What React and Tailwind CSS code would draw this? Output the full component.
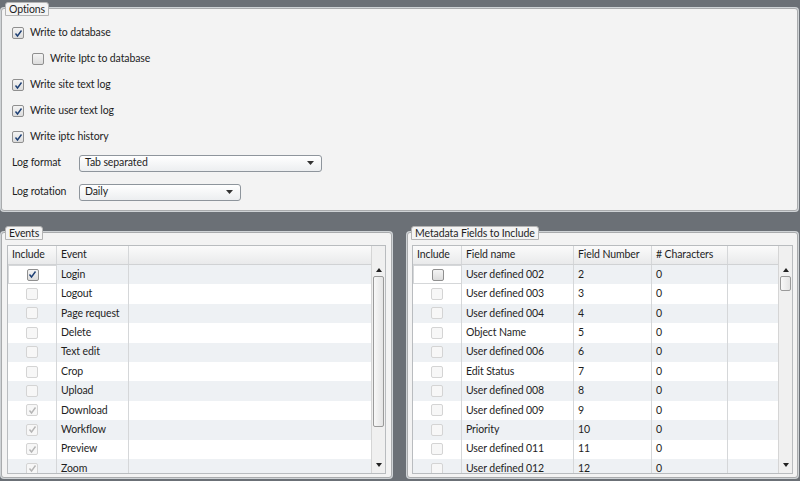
import React from "react";

const font = { fontFamily: 'Lato, "Open Sans", sans-serif' };

function CheckBox({ checked, faded }) {
    return (
        <div className={"w-[12px] h-[12px] border rounded-[2px] flex items-center justify-center shrink-0 " + (faded ? "border-[#d4d4d4] bg-[#f7f7f7]" : "border-[#8f8f8f] bg-gradient-to-b from-[#f4f4f4] to-[#dcdcdc]")}>
            {checked && (
                <svg width="9" height="9" viewBox="0 0 9 9">
                    <path d="M1.5 4.5 L3.5 7 L7.5 1.5" fill="none" stroke={faded ? "#b5b5b5" : "#1d3f74"} strokeWidth="1.4" />
                </svg>
            )}
        </div>
    );
}

function OptionRow({ label, checked, indent }) {
    return (
        <div className={"flex items-center gap-[6px] h-[26px] " + (indent ? "pl-[20px]" : "")}>
            <CheckBox checked={checked} />
            <span className="text-[10.5px] tracking-[-0.1px] text-[#1e1e1e] whitespace-nowrap">{label}</span>
        </div>
    );
}

function Select({ value, width }) {
    return (
        <div className={"h-[17px] border border-[#8e959c] rounded-[3px] bg-gradient-to-b from-white to-[#eceef0] flex items-center justify-between px-[5px] " + width}>
            <span className="text-[10.5px] tracking-[-0.1px] text-[#1e1e1e]">{value}</span>
            <svg width="7" height="4" viewBox="0 0 7 4" className="mr-[2px]"><path d="M0 0 H7 L3.5 4 Z" fill="#333" /></svg>
        </div>
    );
}

function GroupBox({ title, className, children }) {
    return (
        <div className={"relative " + className}>
            <div className="absolute left-[4px] -top-[6px] h-[14px] px-[3px] border border-[#b4b4b4] rounded-t-[3px] bg-[#f4f4f4] text-[10.5px] tracking-[-0.1px] leading-[12px] text-[#1e1e1e] z-10 whitespace-nowrap">
                {title}
            </div>
            <div className="h-full border border-[#a9abad] rounded-[3px] bg-[#f3f3f3] shadow-[0_0_0_1px_#cfd3d6]">
                {children}
            </div>
        </div>
    );
}

function ScrollBar({ thumbTop, thumbHeight }) {
    return (
        <div className="w-[14px] border-l border-[#d5d5d5] bg-[#f0f0f0] flex flex-col items-center relative">
            <div className="h-[12px] flex items-center justify-center mt-[18px]">
                <svg width="6" height="4" viewBox="0 0 6 4"><path d="M0 4 H6 L3 0 Z" fill="#222" /></svg>
            </div>
            <div className="absolute left-[1px] w-[11px] border border-[#9a9a9a] rounded-[2px] bg-gradient-to-r from-[#f8f8f8] to-[#e4e4e4]" style={{ top: thumbTop, height: thumbHeight }} />
            <div className="flex-1" />
            <div className="h-[12px] flex items-center justify-center mb-[2px]">
                <svg width="6" height="4" viewBox="0 0 6 4"><path d="M0 0 H6 L3 4 Z" fill="#222" /></svg>
            </div>
        </div>
    );
}

function Grid({ columns, rows, thumbTop, thumbHeight }) {
    return (
        <div className="h-full border border-[#b9bcbf] bg-white flex overflow-hidden">
            <div className="flex-1 flex flex-col overflow-hidden">
                <div className="flex h-[19px] shrink-0 bg-gradient-to-b from-[#fbfbfb] to-[#e9eaeb] border-b border-[#d0d2d4]">
                    {columns.map((c, i) => (
                        <div key={i} className={"border-r border-[#d5d7d9] flex items-center px-[4px] text-[10.5px] tracking-[-0.1px] text-[#1e1e1e] whitespace-nowrap " + c.w}>{c.label}</div>
                    ))}
                    <div className="flex-1" />
                </div>
                <div className="flex-1 overflow-hidden">
                    {rows.map((r, i) => (
                        <div key={i} className={"flex h-[19.4px] " + (i % 2 === 0 ? "bg-[#eef1f4]" : "bg-white")}>
                            {columns.map((c, j) => (
                                <div key={j} className={"border-r border-[#d5d7d9] flex items-center text-[10.5px] tracking-[-0.1px] text-[#1e1e1e] whitespace-nowrap " + c.w + (j === 0 ? " justify-center" : " px-[4px]") + (j === 0 && i === 0 ? " border border-[#8fd0e2] bg-white" : "")}>
                                    {j === 0 ? <CheckBox checked={r[0] !== 0} faded={i > 0} /> : r[j]}
                                </div>
                            ))}
                            <div className="flex-1" />
                        </div>
                    ))}
                </div>
            </div>
            <ScrollBar thumbTop={thumbTop} thumbHeight={thumbHeight} />
        </div>
    );
}

const events = [
    [1, "Login"], [0, "Logout"], [0, "Page request"], [0, "Delete"], [0, "Text edit"], [0, "Crop"],
    [0, "Upload"], [2, "Download"], [2, "Workflow"], [2, "Preview"], [2, "Zoom"],
];

const fields = [
    ["User defined 002", "2"], ["User defined 003", "3"], ["User defined 004", "4"], ["Object Name", "5"],
    ["User defined 006", "6"], ["Edit Status", "7"], ["User defined 008", "8"], ["User defined 009", "9"],
    ["Priority", "10"], ["User defined 011", "11"], ["User defined 012", "12"],
].map(f => [0, f[0], f[1], "0"]);

export default function App() {
    return (
        <div className="w-[800px] h-[481px] bg-[#6b7076] flex flex-col px-[1px] pt-[8px] pb-[3px] gap-[21px]" style={font}>
            <GroupBox title="Options" className="h-[203px] shrink-0 mr-[1px]">
                <div className="pt-[11px] pl-[10px]">
                    <OptionRow label="Write to database" checked />
                    <OptionRow label="Write Iptc to database" indent />
                    <OptionRow label="Write site text log" checked />
                    <OptionRow label="Write user text log" checked />
                    <OptionRow label="Write iptc history" checked />
                    <div className="flex items-center h-[26px]">
                        <span className="w-[67px] text-[10.5px] tracking-[-0.1px] text-[#1e1e1e]">Log format</span>
                        <Select value="Tab separated" width="w-[243px]" />
                    </div>
                    <div className="flex items-center h-[26px] mt-[3px]">
                        <span className="w-[67px] text-[10.5px] tracking-[-0.1px] text-[#1e1e1e]">Log rotation</span>
                        <Select value="Daily" width="w-[162px]" />
                    </div>
                </div>
            </GroupBox>
            <div className="flex-1 min-h-0 flex gap-[15px]">
                <GroupBox title="Events" className="w-[391px]">
                    <div className="h-full pt-[12px] px-[5px] pb-[3px]">
                        <Grid
                            columns={[{ label: "Include", w: "w-[49px]" }, { label: "Event", w: "w-[72px]" }]}
                            rows={events}
                            thumbTop={30}
                            thumbHeight={151}
                        />
                    </div>
                </GroupBox>
                <GroupBox title="Metadata Fields to Include" className="flex-1 mr-[1px]">
                    <div className="h-full pt-[12px] px-[4px] pb-[3px]">
                        <Grid
                            columns={[
                                { label: "Include", w: "w-[49px]" },
                                { label: "Field name", w: "w-[112px]" },
                                { label: "Field Number", w: "w-[78px]" },
                                { label: "# Characters", w: "w-[76px]" },
                            ]}
                            rows={fields}
                            thumbTop={30}
                            thumbHeight={15}
                        />
                    </div>
                </GroupBox>
            </div>
        </div>
    );
}
